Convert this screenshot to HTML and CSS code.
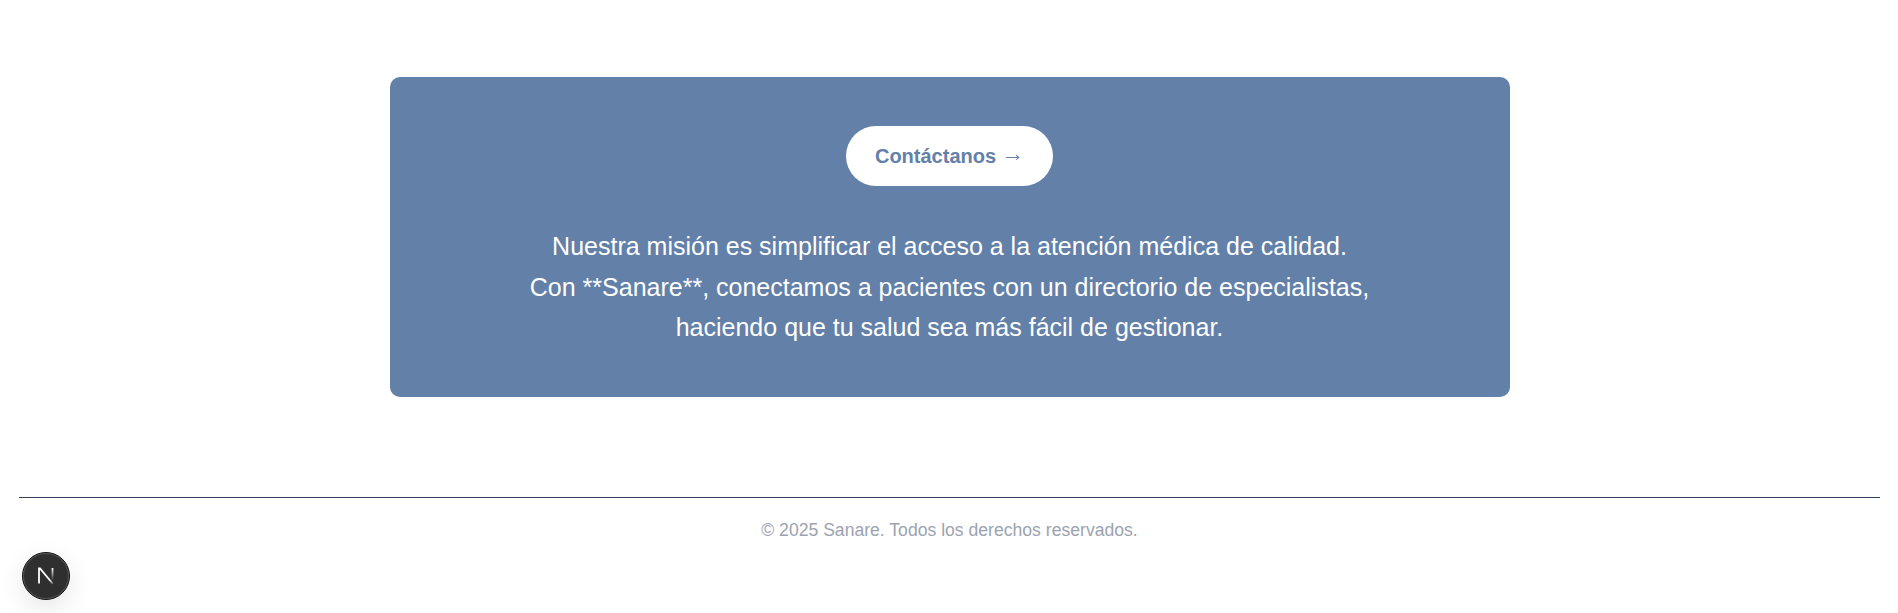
FILE: index.html
```html
<!DOCTYPE html>
<html lang="es">
<head>
<title>Sanare</title>
<link rel="stylesheet" href="styles.css">
</head>
<body>
    <main class="page">
        <section class="mission">
            <a class="contact-btn" href="#">Contáctanos <span class="arrow">→</span></a>
            <p class="mission-text">
                Nuestra misión es simplificar el acceso a la atención médica de calidad.<br>
                Con **Sanare**, conectamos a pacientes con un directorio de especialistas,<br>
                haciendo que tu salud sea más fácil de gestionar.
            </p>
        </section>
    </main>

    <footer class="footer">
        <p>© 2025 Sanare. Todos los derechos reservados.</p>
    </footer>

    <button class="next-badge" aria-label="Next.js">
        <svg width="20" height="20" viewBox="0 0 20 20" fill="none">
            <defs>
                <linearGradient id="diag" x1="3" y1="2" x2="17" y2="18" gradientUnits="userSpaceOnUse">
                    <stop offset="0" stop-color="#fff"/>
                    <stop offset="0.75" stop-color="#fff"/>
                    <stop offset="1" stop-color="#fff" stop-opacity="0.2"/>
                </linearGradient>
                <linearGradient id="stem" x1="0" y1="2" x2="0" y2="13" gradientUnits="userSpaceOnUse">
                    <stop offset="0" stop-color="#fff"/>
                    <stop offset="1" stop-color="#fff" stop-opacity="0.1"/>
                </linearGradient>
            </defs>
            <path d="M3 17.5V2.5H4L17 18" stroke="url(#diag)" stroke-width="1.8"/>
            <path d="M16.5 2V14" stroke="url(#stem)" stroke-width="1.8"/>
        </svg>
    </button>
</body>
</html>
```

FILE: styles.css
```css
* {
    box-sizing: border-box;
}

body {
    margin: 0;
    height: 613px;
    overflow: hidden;
    background-color: #fff;
    font-family: "Liberation Sans", Arial, sans-serif;
}

.page {
    padding: 77px 0 0 2px;
}

.mission {
    width: 1120px;
    height: 320px;
    margin: 0 auto;
    padding: 49px 1px 0 0;
    background-color: #6380a8;
    border-radius: 10px;
    text-align: center;
    color: #fff;
}

.contact-btn {
    display: inline-flex;
    align-items: center;
    justify-content: center;
    gap: 5px;
    width: 207px;
    height: 60px;
    background-color: #fff;
    color: #6380a8;
    border-radius: 30px;
    font-size: 20px;
    font-weight: bold;
    text-decoration: none;
}

.arrow {
    font-weight: normal;
    font-size: 23px;
    line-height: 20px;
    margin-top: -7px;
}

.mission-text {
    margin: 40px 0 0;
    font-size: 25px;
    line-height: 40.7px;
}

.footer {
    margin: 100px 18px 0 19px;
    padding-top: 22px;
    border-top: 1px solid #34405c;
    text-align: center;
    color: #9ca3af;
    font-size: 17.6px;
}

.footer p {
    margin: 0;
}

.next-badge {
    position: fixed;
    left: 22px;
    bottom: 13px;
    width: 48px;
    height: 48px;
    padding: 0;
    display: flex;
    align-items: center;
    justify-content: center;
    background-color: #2f2f2f;
    border: 1px solid #111;
    outline: 1px solid #555;
    outline-offset: -2px;
    border-radius: 50%;
    box-shadow: 0 8px 24px rgba(0, 0, 0, 0.1);
}
```
